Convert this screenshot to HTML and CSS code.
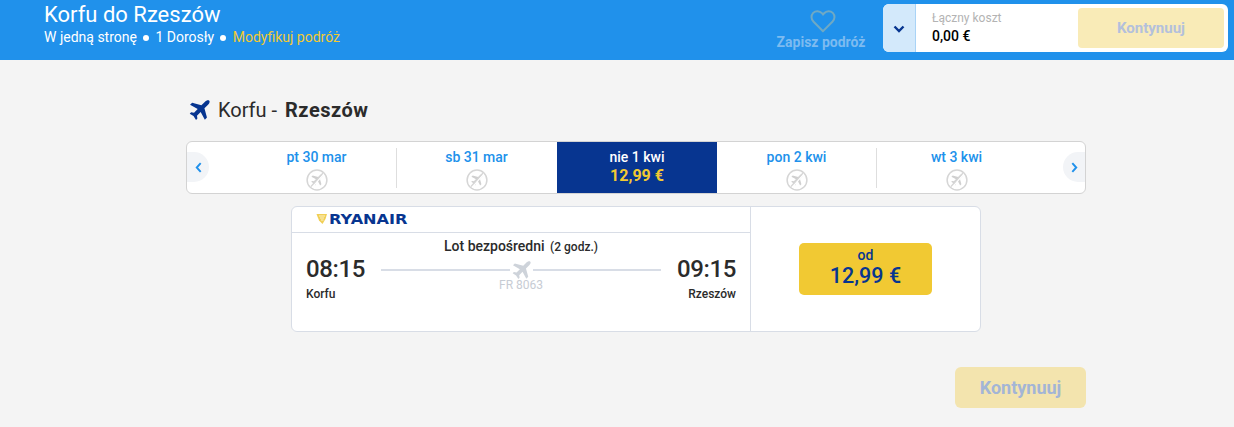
FILE: index.html
```html
<!DOCTYPE html>
<html lang="pl">
<head>
    <meta charset="UTF-8">
    <meta name="viewport" content="width=device-width, initial-scale=1.0">
    <title>Korfu do Rzeszów</title>
    <link rel="stylesheet" href="styles.css">
</head>
<body>

    <svg class="icon-defs" width="0" height="0">
        <defs>
            <path id="plane" d="M19.300.7c-.9-.9-3-.2-4.300 1.100L11.800 5 3 2.600 1 4.600l7.300 4-3.500 3.500-2.800-.4L.7 13l3.600 2.300L6.700 19l1.300-1.300-.4-2.800 3.500-3.500 4 7.300 2-2-2.400-8.800 3.200-3.200c1.300-1.300 2.300-3.100 1.400-4z"/>
            <g id="no-flight">
                <circle cx="11" cy="11" r="9.900" fill="none" stroke="#d6d6d6" stroke-width="1.500"/>
                <use href="#plane" transform="translate(4.800 4.800) scale(.62)" fill="#d0d0d0"/>
                <path d="M17.500 5 6 18.500" stroke="#fff" stroke-width="1.400"/>
                <path d="M17 4 5 17.500" stroke="#d6d6d6" stroke-width="1.200"/>
            </g>
        </defs>
    </svg>

    <header class="top-bar">
        <div class="trip-info">
            <h1>Korfu do Rzeszów</h1>
            <p class="trip-meta">
                <span>W jedną stronę</span>
                <span class="dot"></span>
                <span>1 Dorosły</span>
                <span class="dot"></span>
                <a href="#">Modyfikuj podróż</a>
            </p>
        </div>
        <div class="save-trip">
            <svg class="heart" viewBox="0 0 26 24" width="26" height="24">
                <path d="M13 22.200 3.600 12.800C.9 10.100.9 6.300 3.200 3.900c2.400-2.400 6.400-2.300 8.700.3l1.100 1.200 1.100-1.200c2.300-2.600 6.300-2.700 8.700-.3 2.300 2.400 2.300 6.200-.4 8.900z" fill="none" stroke="#6fa9c4" stroke-width="2"/>
            </svg>
            <span>Zapisz podróż</span>
        </div>
        <div class="summary">
            <button class="summary-toggle" aria-label="Rozwiń">
                <svg viewBox="0 0 12 8" width="12" height="8">
                    <path d="M1.500 1.500 6 6l4.500-4.500" fill="none" stroke="#073590" stroke-width="2.400"/>
                </svg>
            </button>
            <div class="total">
                <span class="total-label">Łączny koszt</span>
                <strong class="total-value">0,00 €</strong>
            </div>
            <button class="continue continue-top">Kontynuuj</button>
        </div>
    </header>

    <main class="content">
        <h2 class="route">
            <svg viewBox="0 0 20 20" width="21" height="21">
                <use href="#plane" fill="#073590"/>
            </svg>
            <span>Korfu - <b>Rzeszów</b></span>
        </h2>

        <div class="dates">
            <button class="arrow arrow-left" aria-label="Wstecz">
                <svg viewBox="0 0 8 12" width="7" height="11"><path d="M6.500 1 2 6l4.500 5" fill="none" stroke="#2091eb" stroke-width="2.200"/></svg>
            </button>
            <div class="date-list">
                <div class="date-tab">
                    <span class="date-name">pt 30 mar</span>
                    <svg viewBox="0 0 22 22" width="22" height="22"><use href="#no-flight"/></svg>
                </div>
                <div class="date-tab">
                    <span class="date-name">sb 31 mar</span>
                    <svg viewBox="0 0 22 22" width="22" height="22"><use href="#no-flight"/></svg>
                </div>
                <div class="date-tab selected">
                    <span class="date-name">nie 1 kwi</span>
                    <span class="date-price">12,99 €</span>
                </div>
                <div class="date-tab">
                    <span class="date-name">pon 2 kwi</span>
                    <svg viewBox="0 0 22 22" width="22" height="22"><use href="#no-flight"/></svg>
                </div>
                <div class="date-tab">
                    <span class="date-name">wt 3 kwi</span>
                    <svg viewBox="0 0 22 22" width="22" height="22"><use href="#no-flight"/></svg>
                </div>
            </div>
            <button class="arrow arrow-right" aria-label="Dalej">
                <svg viewBox="0 0 8 12" width="7" height="11"><path d="M1.500 1 6 6l-4.500 5" fill="none" stroke="#2091eb" stroke-width="2.200"/></svg>
            </button>
        </div>

        <div class="flight-card">
            <div class="flight-left">
                <div class="carrier">
                    <svg viewBox="0 0 12 12" width="12" height="12">
                        <path d="M.5 1h10.500L9.500 6 6.500 11 3 7.500z" fill="#f1cf55"/>
                        <path d="M3 3h6M4 5h4M5 7h2.500" stroke="#fff" stroke-width=".7"/>
                    </svg>
                    <span class="carrier-name">RYANAIR</span>
                </div>
                <div class="flight-body">
                    <div class="flight-type">Lot bezpośredni <small>(2 godz.)</small></div>
                    <div class="flight-times">
                        <div class="stop">
                            <span class="time">08:15</span>
                            <span class="city">Korfu</span>
                        </div>
                        <div class="flight-line">
                            <div class="line-row">
                                <i></i>
                                <svg viewBox="0 0 20 20" width="19" height="19">
                                    <use href="#plane" fill="#ced3da"/>
                                </svg>
                                <i></i>
                            </div>
                            <span class="flight-no">FR 8063</span>
                        </div>
                        <div class="stop stop-end">
                            <span class="time">09:15</span>
                            <span class="city">Rzeszów</span>
                        </div>
                    </div>
                </div>
            </div>
            <div class="flight-right">
                <button class="price-btn">
                    <span class="price-from">od</span>
                    <span class="price-value">12,99 €</span>
                </button>
            </div>
        </div>

        <div class="actions">
            <button class="continue continue-bottom">Kontynuuj</button>
        </div>
    </main>

</body>
</html>
```

FILE: styles.css
```css
* {
    box-sizing: border-box;
}
body {
    margin: 0;
    height: 427px;
    overflow: hidden;
    background-color: #f4f4f4;
    font-family: Roboto, Arial, sans-serif;
    color: #2b2b2b;
}
button {
    font-family: inherit;
    border: none;
    padding: 0;
}
.icon-defs {
    position: absolute;
}

/* top bar */
.top-bar {
    display: flex;
    height: 60px;
    padding: 0 6px 0 44px;
    background-color: #2091eb;
    color: #fff;
}
.trip-info {
    flex: 1;
}
.trip-info h1 {
    margin: 2px 0 0;
    font-size: 22px;
    font-weight: 400;
    line-height: 26px;
}
.trip-meta {
    display: flex;
    align-items: center;
    margin: 1px 0 0;
    font-size: 14px;
    line-height: 17px;
}
.trip-meta a {
    color: #f1c933;
    text-decoration: none;
}
.dot {
    width: 6px;
    height: 6px;
    margin: 0 6.250px;
    border-radius: 50%;
    background-color: #fff;
}
.save-trip {
    display: flex;
    flex-direction: column;
    align-items: center;
    width: 90px;
    margin-right: 17px;
    margin-left: -1px;
    padding-top: 9px;
    font-size: 14px;
    font-weight: 700;
    color: #7dbbf0;
}
.heart {
    margin-left: 3px;
}
.save-trip span {
    margin-top: 1px;
    line-height: 16px;
    white-space: nowrap;
}
.summary {
    display: flex;
    align-items: center;
    width: 345px;
    height: 48px;
    margin-top: 4px;
    border-radius: 6px;
    background-color: #fff;
    overflow: hidden;
}
.summary-toggle {
    width: 33px;
    height: 48px;
    background-color: #d3e9fb;
    border-right: 1px solid #a9d3f6;
}
.total {
    display: flex;
    flex-direction: column;
    flex: 1;
    padding-left: 16px;
}
.total-label {
    font-size: 12px;
    line-height: 14px;
    color: #b3b3b3;
}
.total-value {
    margin-top: 3px;
    font-size: 14px;
    line-height: 17px;
    font-weight: 500;
    color: #000;
}
.continue {
    font-weight: 700;
    border-radius: 4px;
}
.continue-top {
    width: 146px;
    height: 40px;
    margin-right: 4px;
    font-size: 15px;
    background-color: #f9ebb7;
    color: #b3c0dc;
}

/* main column */
.content {
    width: 900px;
    margin-left: 186px;
}
.route {
    display: flex;
    align-items: center;
    height: 30px;
    margin: 35px 0 16px;
    font-size: 20px;
    font-weight: 400;
}
.route svg {
    margin-right: 8px;
    margin-left: 3px;
}
.route b {
    margin-left: 3px;
    font-weight: 700;
    letter-spacing: .5px;
}

/* dates */
.dates {
    display: flex;
    height: 53px;
    border: 1px solid #d3d3d3;
    border-radius: 6px;
    background-color: #fff;
    overflow: hidden;
}
.arrow {
    display: flex;
    align-items: center;
    width: 22px;
    height: 30px;
    margin-top: 10px;
    background-color: #f2f4f7;
}
.arrow-left {
    justify-content: center;
    border-radius: 0 15px 15px 0;
}
.arrow-right {
    justify-content: center;
    margin-left: 26px;
    border-radius: 15px 0 0 15px;
}
.date-list {
    display: flex;
    margin-left: 28px;
}
.date-tab {
    display: flex;
    flex-direction: column;
    align-items: center;
    width: 160px;
    padding: 7px 1px 0 0;
    position: relative;
}
.date-tab + .date-tab::before {
    content: "";
    position: absolute;
    left: -1px;
    top: 6px;
    bottom: 5px;
    width: 1px;
    background-color: #dedede;
}
.date-tab.selected::before,
.selected + .date-tab::before {
    display: none;
}
.date-name {
    font-size: 14px;
    line-height: 17px;
    font-weight: 500;
    color: #2091eb;
}
.date-tab svg {
    margin-top: 3px;
}
.selected {
    padding-right: 0;
    background-color: #073590;
}
.selected .date-name {
    color: #fff;
}
.date-price {
    font-size: 16px;
    line-height: 20px;
    font-weight: 700;
    color: #f1c933;
}

/* flight card */
.flight-card {
    display: flex;
    width: 690px;
    height: 126px;
    margin: 12px 0 0 105px;
    border: 1px solid #d8dde6;
    border-radius: 6px;
    background-color: #fff;
}
.flight-left {
    width: 459px;
    border-right: 1px solid #d8dde6;
}
.carrier {
    display: flex;
    align-items: center;
    height: 26px;
    padding: 0 0 2px 24px;
    border-bottom: 1px solid #d8dde6;
}
.carrier-name {
    margin-left: 1px;
    font-family: "DejaVu Sans", sans-serif;
    font-size: 14px;
    font-weight: 700;
    color: #073590;
    transform: scaleX(1.150);
    transform-origin: left center;
}
.flight-body {
    padding: 5px 14px 0;
}
.flight-type {
    font-size: 14px;
    font-weight: 500;
    line-height: 17px;
    text-align: center;
}
.flight-type small {
    margin-left: 2px;
    font-size: 12px;
    font-weight: 500;
}
.flight-times {
    display: flex;
    justify-content: space-between;
    margin-top: -1px;
}
.stop {
    display: flex;
    flex-direction: column;
}
.stop-end {
    align-items: flex-end;
}
.time {
    font-size: 24px;
    font-weight: 500;
    line-height: 28px;
    letter-spacing: -.4px;
}
.city {
    margin-top: 3px;
    font-size: 12px;
    font-weight: 500;
    line-height: 16px;
}
.flight-line {
    display: flex;
    flex-direction: column;
    align-items: center;
    width: 280px;
}
.line-row {
    display: flex;
    align-items: center;
    width: 100%;
    height: 16px;
    margin-top: 7px;
}
.line-row i {
    flex: 1;
    height: 2px;
    background-color: #d8dde6;
}
.line-row svg {
    margin: 0 2px;
}
.flight-no {
    font-size: 12px;
    line-height: 14px;
    color: #c7ccd4;
}
.flight-right {
    flex: 1;
    padding: 36px 0 0 48px;
}
.price-btn {
    display: flex;
    flex-direction: column;
    align-items: center;
    width: 133px;
    height: 52px;
    padding-top: 4px;
    border-radius: 5px;
    background-color: #f1c933;
    color: #073590;
}
.price-from {
    font-size: 14px;
    line-height: 17px;
    font-weight: 500;
}
.price-value {
    font-size: 21.500px;
    line-height: 24px;
    font-weight: 500;
}

.actions {
    display: flex;
    justify-content: flex-end;
    margin-top: 35px;
}
.continue-bottom {
    width: 131px;
    height: 41px;
    font-size: 18px;
    border-radius: 6px;
    background-color: #f3e4ae;
    color: #a3b5d6;
}
```
